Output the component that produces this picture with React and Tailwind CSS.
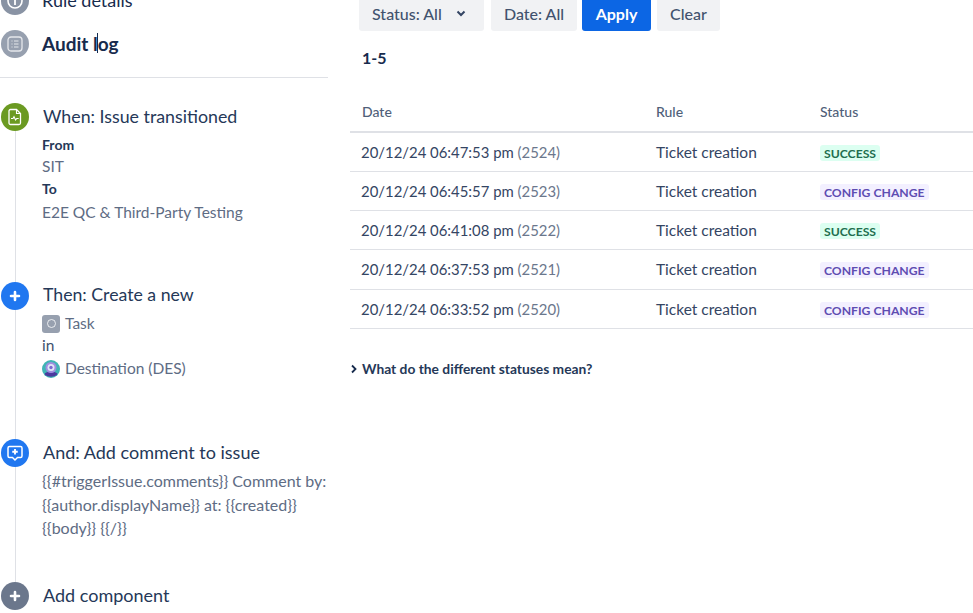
const FONT = "font-['Lato','Open_Sans',sans-serif]";

function Circle({ color, children }) {
  return (
    <div className={`w-7 h-7 rounded-full shrink-0 flex items-center justify-center text-white ${color}`}>
      {children}
    </div>
  );
}

const PlusIcon = () => (
  <svg width="12" height="12" viewBox="0 0 12 12"><path d="M6 2v8M2 6h8" stroke="#fff" strokeWidth="2.600" strokeLinecap="round" /></svg>
);

const InfoIcon = () => (
  <svg width="18" height="18" viewBox="0 0 18 18" fill="none"><circle cx="9" cy="9" r="7" stroke="#fff" strokeWidth="1.600" /><path d="M9 8v5" stroke="#fff" strokeWidth="1.800" /><circle cx="9" cy="5.500" r="1" fill="#fff" /></svg>
);

const ListIcon = () => (
  <svg width="18" height="18" viewBox="0 0 18 18" fill="none">
    <rect x="2" y="2" width="14" height="14" rx="3" stroke="#fff" strokeOpacity=".75" strokeWidth="1.300" />
    <path d="M5.500 6h1M8 6h4.500M5.500 9h1M8 9h4.500M5.500 12h1M8 12h4.500" stroke="#fff" strokeOpacity=".75" strokeWidth="1.200" />
  </svg>
);

const TriggerIcon = () => (
  <svg width="16" height="18" viewBox="0 0 16 18" fill="none">
    <path d="M3.500 1.500h6l4 4v9.500a1.500 1.500 0 0 1-1.500 1.500H3.500A1.500 1.500 0 0 1 2 15V3a1.500 1.500 0 0 1 1.500-1.500z" stroke="#fff" strokeWidth="1.300" />
    <path d="M9.500 1.500v4h4" stroke="#fff" strokeWidth="1.100" />
    <path d="M4 10.500h2l1-1.800 1.600 3.200 1.100-1.400h2" stroke="#fff" strokeWidth="1.100" />
  </svg>
);

const CommentIcon = () => (
  <svg width="18" height="18" viewBox="0 0 18 18" fill="none">
    <path d="M3.500 2.500h11A1.500 1.500 0 0 1 16 4v8a1.500 1.500 0 0 1-1.500 1.500h-3L9 16l-2.500-2.500h-3A1.500 1.500 0 0 1 2 12V4a1.500 1.500 0 0 1 1.500-1.500z" stroke="#fff" strokeWidth="1.500" />
    <path d="M9 5v5.500M6.250 7.750h5.500" stroke="#fff" strokeWidth="1.900" />
  </svg>
);

const Avatar = () => (
  <svg width="18" height="18" viewBox="0 0 18 18" className="shrink-0">
    <circle cx="9" cy="9" r="9" fill="#3fb5b5" />
    <path d="M2.500 14c1-3.500 12-3.500 13 0-2 3.500-11 3.500-13 0z" fill="#4b3a9e" />
    <circle cx="9" cy="7.500" r="5.500" fill="#9f8fe0" />
    <circle cx="9" cy="7.500" r="3.500" fill="#dfe6f7" />
    <circle cx="9" cy="7.500" r="1.700" fill="#7a6cd0" />
  </svg>
);

const TaskIcon = () => (
  <div className="w-[18px] h-[18px] rounded-[3px] bg-[#97a0af] flex items-center justify-center shrink-0">
    <div className="w-[9px] h-[9px] rounded-full border border-white/80" />
  </div>
);

const rows = [
  ["20/12/24 06:47:53 pm", "(2524)", "SUCCESS", "h-[39px]"],
  ["20/12/24 06:45:57 pm", "(2523)", "CONFIG CHANGE", "h-[39px]"],
  ["20/12/24 06:41:08 pm", "(2522)", "SUCCESS", "h-[39px]"],
  ["20/12/24 06:37:53 pm", "(2521)", "CONFIG CHANGE", "h-[40px]"],
  ["20/12/24 06:33:52 pm", "(2520)", "CONFIG CHANGE", "h-[39px]"],
];

function Lozenge({ label }) {
  const ok = label === "SUCCESS";
  return (
    <span className={`inline-block rounded-[3px] px-[4px] h-[16px] leading-[17px] text-[12.200px] font-bold ${ok ? "bg-[#dcfff1] text-[#216e4e]" : "bg-[#f3f0ff] text-[#5e4db2]"}`}>
      {label}
    </span>
  );
}

function FilterButton({ children, className = "" }) {
  return (
    <button className={`h-[35px] shrink-0 rounded-[3px] bg-[#f1f2f4] text-[#42526e] text-[16px] font-medium flex items-center ${className}`}>
      {children}
    </button>
  );
}

export default function App() {
  return (
    <div className={`w-[973px] h-[613px] overflow-hidden bg-white flex ${FONT}`}>
      {/* Left panel */}
      <div className="w-[350px] shrink-0 pt-[1px] relative">
        <div className="-mt-[22px] w-[328px]">
          <div className="h-[43px] flex items-center gap-[13px] pl-[1px]">
            <Circle color="bg-[#8993a4]"><InfoIcon /></Circle>
            <span className="text-[18px] text-[#172b4d]">Rule details</span>
          </div>
          <div className="h-[43px] flex items-center gap-[13px] pl-[1px]">
            <Circle color="bg-[#97a0af]"><ListIcon /></Circle>
            <span className="text-[19px] font-bold text-[#172b4d] relative top-[1px]">
              Audit log
              <span className="absolute left-[55px] top-[3px] w-[1px] h-[20px] bg-[#172b4d]" />
            </span>
          </div>
          <div className="mt-[12px] h-[1px] bg-[#dfe1e6]" />
        </div>

        <div className="absolute left-[15px] top-[128px] h-[454px] w-[1px] bg-[#dfe1e6]" />

        <div className="relative pl-[1px] mt-[24px] w-[328px]">
          <div className="h-[179px]">
            <div className="flex items-center gap-[14px] h-[29px]">
              <Circle color="bg-[#6b9a22]"><TriggerIcon /></Circle>
              <span className="text-[17.800px] text-[#253858]">When: Issue transitioned</span>
            </div>
            <div className="pl-[41px] mt-[3px] text-[15.500px] text-[#5e6c84]">
              <div className="h-[22px] leading-[22px] text-[14px] font-bold text-[#253858]">From</div>
              <div className="h-[21px] leading-[21px]">SIT</div>
              <div className="h-[24px] leading-[24px] text-[14px] font-bold text-[#253858]">To</div>
              <div className="h-[22px] leading-[22px]">E2E QC &amp; Third-Party Testing</div>
            </div>
          </div>

          <div className="h-[157px]">
            <div className="flex items-center gap-[14px] h-[29px]">
              <Circle color="bg-[#2077f0]"><PlusIcon /></Circle>
              <span className="text-[17.700px] text-[#253858]">Then: Create a new</span>
            </div>
            <div className="pl-[41px] mt-[2px] text-[15.500px] text-[#5e6c84]">
              <div className="h-[23px] flex items-center gap-[5px]"><TaskIcon /><span>Task</span></div>
              <div className="h-[21px] leading-[21px] text-[#42526e]">in</div>
              <div className="h-[25px] flex items-center gap-[5px]"><Avatar /><span>Destination (DES)</span></div>
            </div>
          </div>

          <div className="h-[143px]">
            <div className="flex items-center gap-[14px] h-[29px]">
              <Circle color="bg-[#2077f0]"><CommentIcon /></Circle>
              <span className="text-[18px] text-[#253858]">And: Add comment to issue</span>
            </div>
            <div className="pl-[41px] mt-[2px] text-[16px] leading-[23.500px] text-[#5e6c84]">
              <div>{"{{#triggerIssue.comments}} Comment by:"}</div>
              <div>{"{{author.displayName}} at: {{created}}"}</div>
              <div>{"{{body}} {{/}}"}</div>
            </div>
          </div>

          <div className="flex items-center gap-[14px] h-[29px]">
            <Circle color="bg-[#6b778c]"><PlusIcon /></Circle>
            <span className="text-[18px] text-[#253858]">Add component</span>
          </div>
        </div>
      </div>

      {/* Right panel */}
      <div className="flex-1 min-w-0">
        <div className="flex h-[31px] items-end pl-[9px]">
          <FilterButton className="w-[125px] pl-[13px]">
            Status: All
            <svg width="10" height="7" viewBox="0 0 10 7" className="ml-[14px]"><path d="M1.500 1.500 5 5l3.500-3.500" fill="none" stroke="#344563" strokeWidth="2" /></svg>
          </FilterButton>
          <FilterButton className="w-[86px] ml-[7px] justify-center">Date: All</FilterButton>
          <FilterButton className="w-[69px] ml-[5px] justify-center !bg-[#0c66e4] !text-white !font-bold">Apply</FilterButton>
          <FilterButton className="w-[63px] ml-[6px] justify-center">Clear</FilterButton>
        </div>
        <div className="mt-[17px] pl-[12px] h-[20px] leading-[20px] text-[16px] font-bold text-[#172b4d]">1-5</div>

        <div className="mt-[24px] w-[623px]">
          <div className="h-[41px] grid grid-cols-[306px_164px_1fr] items-center border-b-2 border-[#dfe1e6] text-[14px] font-medium text-[#505f79]">
            <div className="pl-[12px]">Date</div>
            <div>Rule</div>
            <div>Status</div>
          </div>
          {rows.map(([d, id, s, h]) => (
            <div key={id} className={`${h} grid grid-cols-[306px_164px_1fr] items-center border-b border-[#dfe1e6] text-[15.500px] text-[#344563]`}>
              <div className="pl-[11px] text-[14.900px]">{d} <span className="text-[#6b778c]">{id}</span></div>
              <div className="pt-[1px]">Ticket creation</div>
              <div className="flex pt-[1px]"><Lozenge label={s} /></div>
            </div>
          ))}
        </div>

        <div className="mt-[30px] flex items-center h-[20px] text-[13.800px] font-bold text-[#253858]">
          <svg width="12" height="12" viewBox="0 0 12 12" className="shrink-0"><path d="M2 2.500 5.500 6 2 9.500" fill="none" stroke="#172b4d" strokeWidth="1.800" /></svg>
          <span>What do the different statuses mean?</span>
        </div>
      </div>
    </div>
  );
}
